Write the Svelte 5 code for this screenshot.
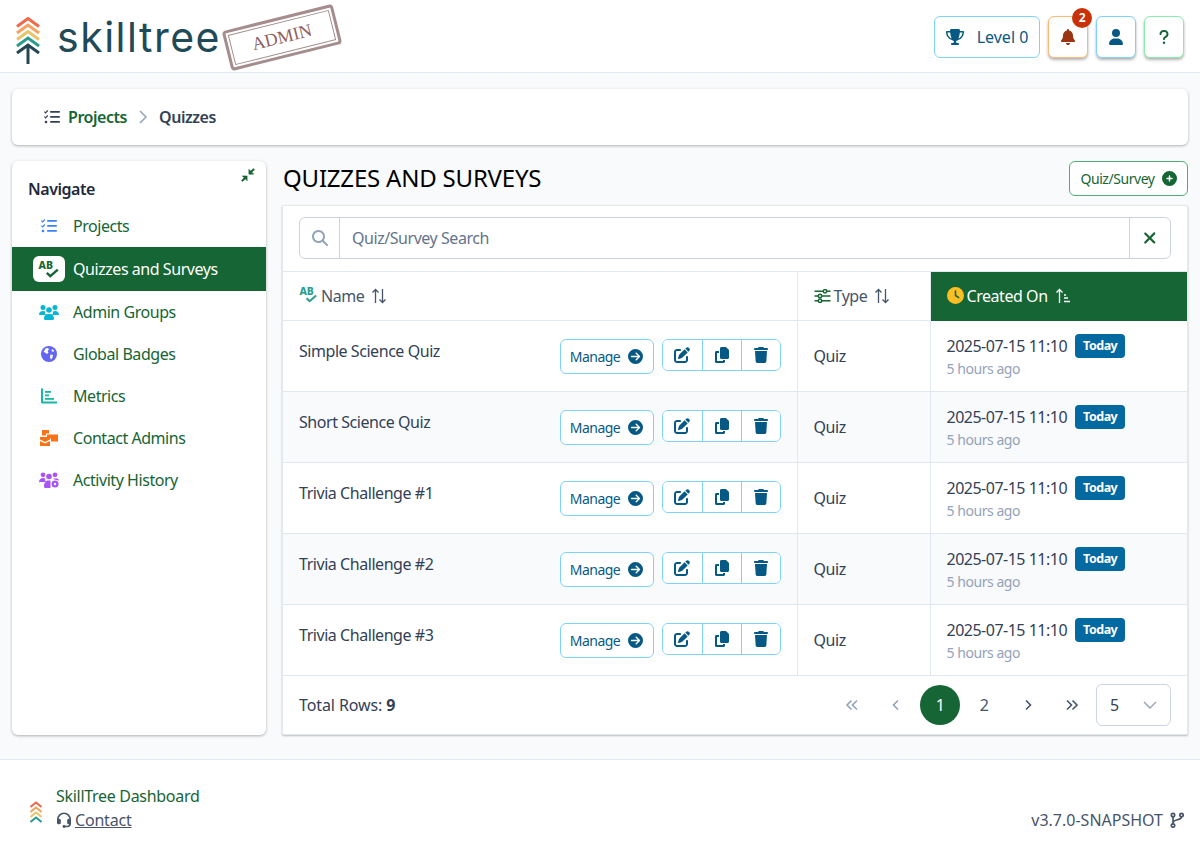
<script>
	const rows = [
		'Simple Science Quiz',
		'Short Science Quiz',
		'Trivia Challenge #1',
		'Trivia Challenge #2',
		'Trivia Challenge #3'
	];

	const paths = {
		bell: 'M224 0c-17.7 0-32 14.3-32 32V51.2C119 66 64 130.6 64 208v18.8c0 47-17.3 92.4-48.5 127.6l-7.4 8.3c-8.4 9.4-10.4 22.9-5.3 34.4S19.4 416 32 416H416c12.6 0 24-7.4 29.2-18.9s3.1-25-5.3-34.4l-7.4-8.3C401.3 319.2 384 273.9 384 226.8V208c0-77.4-55-142-128-156.8V32c0-17.7-14.3-32-32-32zm45.3 493.3c12-12 18.7-28.3 18.7-45.3H224 160c0 17 6.7 33.3 18.7 45.3s28.3 18.7 45.3 18.7s33.3-6.7 45.3-18.7z',
		user: 'M224 256A128 128 0 1 0 224 0a128 128 0 1 0 0 256zm-45.7 48C79.8 304 0 383.8 0 482.3C0 498.7 13.3 512 29.7 512H418.3c16.4 0 29.7-13.3 29.7-29.7C448 383.8 368.2 304 269.7 304H178.3z',
		trophy: 'M400 0H176c-26.5 0-48.1 21.8-47.1 48.2c.2 5.3 .4 10.6 .7 15.8H24C10.7 64 0 74.7 0 88c0 92.6 33.5 157 78.5 200.7c44.3 43.1 98.3 64.8 138.1 75.8c23.4 6.5 39.4 26 39.4 45.6c0 20.9-17 37.9-37.9 37.9H192c-17.7 0-32 14.3-32 32s14.3 32 32 32H384c17.7 0 32-14.3 32-32s-14.3-32-32-32H357.9C337 448 320 431 320 410.1c0-19.6 15.9-39.2 39.4-45.6c39.9-11 93.9-32.7 138.2-75.8C542.5 245 576 180.6 576 88c0-13.3-10.7-24-24-24H446.4c.3-5.2 .5-10.4 .7-15.8C448.1 21.8 426.5 0 400 0zM48.9 112h84.4c9.1 90.1 29.2 150.3 51.9 190.6c-24.9-11-50.8-26.5-73.2-48.3c-32-31.1-58-76-63-142.3zM464.1 254.3c-22.4 21.8-48.3 37.3-73.2 48.3c22.7-40.3 42.8-100.5 51.9-190.6h84.4c-5.1 66.3-31.1 111.2-63 142.3z',
		trash: 'M135.2 17.7L128 32H32C14.3 32 0 46.3 0 64S14.3 96 32 96H416c17.7 0 32-14.3 32-32s-14.3-32-32-32H320l-7.2-14.3C307.4 6.8 296.3 0 284.2 0H163.8c-12.1 0-23.2 6.8-28.6 17.7zM416 128H32L53.2 467c1.6 25.3 22.6 45 47.9 45H346.9c25.3 0 46.3-19.7 47.9-45L416 128z',
		copy: 'M208 0H332.1c12.7 0 24.9 5.1 33.9 14.1l67.9 67.9c9 9 14.1 21.2 14.1 33.9V336c0 26.5-21.5 48-48 48H208c-26.5 0-48-21.5-48-48V48c0-26.5 21.5-48 48-48zM48 128h80v64H64V448H256V416h64v48c0 26.5-21.5 48-48 48H48c-26.5 0-48-21.5-48-48V176c0-26.5 21.5-48 48-48z',
		edit: 'M471.6 21.7c-21.9-21.9-57.3-21.9-79.2 0L362.3 51.7l97.9 97.9 30.1-30.1c21.9-21.9 21.9-57.3 0-79.2L471.6 21.7zm-299.2 220c-6.1 6.1-10.8 13.6-13.5 21.9l-29.6 88.8c-2.9 8.6-.6 18.1 5.8 24.6s15.9 8.7 24.6 5.8l88.8-29.6c8.2-2.7 15.7-7.4 21.9-13.5L437.7 172.3 339.7 74.3 172.4 241.7zM96 64C43 64 0 107 0 160V416c0 53 43 96 96 96H352c53 0 96-43 96-96V320c0-17.7-14.3-32-32-32s-32 14.3-32 32v96c0 17.7-14.3 32-32 32H96c-17.7 0-32-14.3-32-32V160c0-17.7 14.3-32 32-32h96c17.7 0 32-14.3 32-32s-14.3-32-32-32H96z',
		arrow: 'M0 256a256 256 0 1 0 512 0A256 256 0 1 0 0 256zM297 385c-9.4 9.4-24.6 9.4-33.9 0s-9.4-24.6 0-33.9l71-71L120 280c-13.3 0-24-10.7-24-24s10.7-24 24-24l214.1 0-71-71c-9.4-9.4-9.4-24.6 0-33.9s24.6-9.4 33.9 0L409 239c9.4 9.4 9.4 24.6 0 33.9L297 385z',
		plus: 'M256 512A256 256 0 1 0 256 0a256 256 0 1 0 0 512zM232 344V280H168c-13.3 0-24-10.7-24-24s10.7-24 24-24h64V168c0-13.3 10.7-24 24-24s24 10.7 24 24v64h64c13.3 0 24 10.7 24 24s-10.7 24-24 24H280v64c0 13.3-10.7 24-24 24s-24-10.7-24-24z',
		clock: 'M256 0a256 256 0 1 1 0 512A256 256 0 1 1 256 0zM232 120V256c0 8 4 15.5 10.7 20l96 64c11 7.4 25.9 4.4 33.3-6.7s4.4-25.9-6.7-33.3L280 243.2V120c0-13.3-10.7-24-24-24s-24 10.7-24 24z',
		question: 'M80 160c0-35.3 28.7-64 64-64h32c35.3 0 64 28.7 64 64v3.6c0 21.8-11.1 42.1-29.4 53.8l-42.2 27.1c-25.2 16.2-40.4 44.1-40.4 74V320c0 17.7 14.3 32 32 32s32-14.3 32-32v-1.4c0-8.2 4.2-15.8 11-20.2l42.2-27.1c36.6-23.6 58.8-64.1 58.8-107.7V160c0-70.7-57.3-128-128-128H144C73.3 32 16 89.3 16 160c0 17.7 14.3 32 32 32s32-14.3 32-32zm80 320a40 40 0 1 0 0-80 40 40 0 1 0 0 80z',
		search: 'M416 208c0 45.9-14.9 88.3-40 122.7L502.6 457.4c12.5 12.5 12.5 32.8 0 45.3s-32.8 12.5-45.3 0L330.7 376c-34.4 25.2-76.8 40-122.7 40C93.1 416 0 322.9 0 208S93.1 0 208 0S416 93.1 416 208zM208 352a144 144 0 1 0 0-288 144 144 0 1 0 0 288z',
		xmark: 'M342.6 150.6c12.5-12.5 12.5-32.8 0-45.3s-32.8-12.5-45.3 0L192 210.7 86.6 105.4c-12.5-12.5-32.8-12.5-45.3 0s-12.5 32.8 0 45.3L146.7 256 41.4 361.4c-12.5 12.5-12.5 32.8 0 45.3s32.8 12.5 45.3 0L192 301.3 297.4 406.6c12.5 12.5 32.8 12.5 45.3 0s12.5-32.8 0-45.3L237.3 256 342.6 150.6z'
	};
</script>

{#snippet fa(name, vw, cls)}
	<svg class={cls} viewBox="0 0 {vw} 512" fill="currentColor" aria-hidden="true"><path d={paths[name]} /></svg>
{/snippet}

{#snippet listCheck(cls)}
	<svg class={cls} viewBox="0 0 16 14" fill="currentColor" aria-hidden="true">
		<path d="M0.4 1.600 1.600 2.800 3.800 0.500M0.4 6.600 1.600 7.800 3.800 5.500" fill="none" stroke="currentColor" stroke-width="1.200" />
		<circle cx="2" cy="12" r="1.300" />
		<rect x="6" y="1" width="10" height="1.800" rx=".8" />
		<rect x="6" y="6" width="10" height="1.800" rx=".8" />
		<rect x="6" y="11" width="10" height="1.800" rx=".8" />
	</svg>
{/snippet}

{#snippet quizIcon(cls, size)}
	<svg class={cls} viewBox="0 0 20 16" overflow="visible" aria-hidden="true">
		<text x="0.500" y="8" font-family="'Noto Sans', sans-serif" font-size={size} font-weight="800" letter-spacing="0" fill="currentColor">AB</text>
		<path d="M8 11.500 11.200 14.500 18 8.500" fill="none" stroke="currentColor" stroke-width="2.200" />
	</svg>
{/snippet}

{#snippet chevrons(cls)}
	<svg class={cls} viewBox="0 0 24 47" aria-hidden="true" fill="none" stroke-width="3">
		<path d="M1 9.500 12 1.500 23 9.500" stroke="#ee6a4a" />
		<path d="M1 16 12 8 23 16" stroke="#f4a261" />
		<path d="M1 22.500 12 14.500 23 22.500" stroke="#e9c46a" />
		<path d="M1 29 12 21 23 29" stroke="#2a9d8f" />
		<path d="M1 36 12 28 23 36M12 29V47" stroke="#264653" />
	</svg>
{/snippet}

{#snippet footChevrons(cls)}
	<svg class={cls} viewBox="0 0 12 22" aria-hidden="true" fill="none" stroke-width="2">
		<path d="M.5 6 6 1.500 11.500 6" stroke="#ee6a4a" />
		<path d="M.5 11 6 6.500 11.500 11" stroke="#f4a261" />
		<path d="M.5 16 6 11.500 11.500 16" stroke="#e9c46a" />
		<path d="M.5 21 6 16.500 11.500 21" stroke="#2a9d8f" />
	</svg>
{/snippet}

{#snippet sortBoth()}
	<svg class="sort" viewBox="0 0 16 16" fill="none" stroke="currentColor" stroke-width="1.300" aria-hidden="true">
		<path d="M4.500 15V1.500M1.500 4.500 4.500 1.500 7.500 4.500M11.500 1V14.500M8.500 11.500 11.500 14.500 14.500 11.500" />
	</svg>
{/snippet}

<header class="topbar">
	<div class="brand">
		{@render chevrons('tree')}
		<span class="wordmark">skilltree</span>
		<div class="stamp"><div class="stamp-inner">ADMIN</div></div>
	</div>
	<div class="top-actions">
		<button class="top-btn level">
			{@render fa('trophy', 576, 'ic16')}
			<span>Level 0</span>
		</button>
		<button class="top-btn square orange">
			{@render fa('bell', 448, 'ic16')}
			<span class="count">2</span>
		</button>
		<button class="top-btn square blue">{@render fa('user', 448, 'ic16')}</button>
		<button class="top-btn square green">{@render fa('question', 320, 'ic16')}</button>
	</div>
</header>

<div class="page">
	<nav class="crumbs">
		{@render listCheck('crumb-icon')}
		<a href="#projects">Projects</a>
		<svg class="crumb-sep" viewBox="0 0 10 16" fill="none" stroke="currentColor" stroke-width="1.500" aria-hidden="true"><path d="M2 2 8 8 2 14" /></svg>
		<span>Quizzes</span>
	</nav>

	<div class="columns">
		<aside class="side">
			<svg class="collapse" viewBox="0 0 16 16" fill="currentColor" stroke="currentColor" aria-hidden="true">
				<path d="M9 1.500V7H14.500ZM7 9V14.500L1.500 9Z" stroke-width=".6" />
				<path d="M10.500 5.500 15 1M5.500 10.500 1 15" stroke-width="2.400" fill="none" />
			</svg>
			<h2>Navigate</h2>
			<ul>
				<li><span class="nav-ic">{@render listCheck('n-ic c-blue')}</span>Projects</li>
				<li class="active"><span class="nav-ic badge-ic">{@render quizIcon('n-quiz', 9.5)}</span>Quizzes and Surveys</li>
				<li>
					<span class="nav-ic">
						<svg class="n-ic wide c-cyan" viewBox="0 0 20 16" fill="currentColor" aria-hidden="true">
							<circle cx="4" cy="3.500" r="2.500" /><circle cx="16" cy="3.500" r="2.500" /><circle cx="10" cy="6" r="2.800" />
							<path d="M0 10.500C0 8 2 7 4 7 5 7 5.800 7.300 6.300 7.800 5.800 8.800 6.200 10 7 11H1C.4 11 0 10.900 0 10.500ZM20 10.500C20 8 18 7 16 7 15 7 14.200 7.300 13.700 7.800 14.200 8.800 13.800 10 13 11H19C19.600 11 20 10.900 20 10.500ZM5 14.500C5 11.500 7 10 8.500 10H11.500C13 10 15 11.500 15 14.500 15 15.400 14.500 16 14 16H6C5.500 16 5 15.400 5 14.500Z" />
						</svg>
					</span>Admin Groups
				</li>
				<li>
					<span class="nav-ic">
						<svg class="n-ic c-indigo" viewBox="0 0 16 16" aria-hidden="true">
							<circle cx="8" cy="8" r="8" fill="currentColor" />
							<path d="M4.500 2.500 7 2 8 3.500 6.500 5 7.500 6.500 6 8 4 6.500 2.500 6ZM9.500 8.500 12 9 11.500 11.500 10 13.500 9 11.500ZM11 3 13 4.500 12.500 6 10.500 5Z" fill="#fff" />
						</svg>
					</span>Global Badges
				</li>
				<li>
					<span class="nav-ic">
						<svg class="n-ic c-teal" viewBox="0 0 16 16" fill="currentColor" aria-hidden="true">
							<path d="M0 .5H2V13.500H16V15.500H1.500C.6 15.500 0 14.900 0 14Z" />
							<rect x="4" y="3" width="6" height="1.800" /><rect x="4" y="6.500" width="4" height="1.800" /><rect x="4" y="10" width="9" height="1.800" />
						</svg>
					</span>Metrics
				</li>
				<li>
					<span class="nav-ic">
						<svg class="n-ic wide c-orange" viewBox="0 0 18 16" fill="currentColor" aria-hidden="true">
							<path d="M2 0H9V3.500H6V5.500H2ZM7 4.500H18V11.500H11V8.500H7ZM14 7H16V9H14ZM0 7H10V9.500L5 12 0 9.500ZM0 11 5 13.500 10 11V16H0Z" />
						</svg>
					</span>Contact Admins
				</li>
				<li>
					<span class="nav-ic">
						<svg class="n-ic wide c-purple" viewBox="0 0 20 16" fill="currentColor" aria-hidden="true">
							<circle cx="4" cy="2.800" r="2.400" /><circle cx="16" cy="2.800" r="2.400" /><circle cx="10" cy="4.500" r="2.800" />
							<path d="M0 10C0 7.500 2 6 4 6 5 6 5.800 6.300 6.300 6.800 5.800 7.800 6.200 9 7 10H1C.4 10.500 0 10.400 0 10ZM5 14C5 11 7 8.500 9 8.500H11.500V16H6C5.500 16 5 15 5 14Z" />
							<circle cx="16" cy="12" r="3.500" /><circle cx="16" cy="12" r="1.200" fill="#fff" />
							<path d="M13.500 6.500H18C19 6.500 20 7.500 20 8.500L16 7.800Z" />
						</svg>
					</span>Activity History
				</li>
			</ul>
		</aside>

		<main class="content">
			<div class="title-row">
				<h1>QUIZZES AND SURVEYS</h1>
				<button class="new-btn">Quiz/Survey {@render fa('plus', 512, 'ic15')}</button>
			</div>

			<section class="panel">
				<div class="search-wrap">
					<div class="search">
						<span class="addon">{@render fa('search', 512, 'ic16')}</span>
						<span class="placeholder">Quiz/Survey Search</span>
						<span class="addon clear">{@render fa('xmark', 384, 'ic18')}</span>
					</div>
				</div>

				<table>
					<colgroup><col class="c1" /><col class="c2" /><col class="c3" /></colgroup>
					<thead>
						<tr>
							<th><span class="th">{@render quizIcon('th-quiz', 11)}Name {@render sortBoth()}</span></th>
							<th>
								<span class="th">
									<svg class="th-slide" viewBox="0 0 16 14" fill="none" stroke="currentColor" stroke-width="1.500" aria-hidden="true">
										<path d="M0 2.200H16M0 7H16M0 11.800H16" />
										<circle cx="10.500" cy="2.200" r="1.700" fill="#fff" /><circle cx="5.500" cy="7" r="1.700" fill="#fff" /><circle cx="5.500" cy="11.800" r="1.700" fill="#fff" />
									</svg>
									Type {@render sortBoth()}
								</span>
							</th>
							<th class="sorted">
								<span class="th">
									{@render fa('clock', 512, 'ic17 c-amber')}
									Created On
									<svg class="sort" viewBox="0 0 16 16" fill="none" stroke="currentColor" stroke-width="1.300" aria-hidden="true">
										<path d="M4.500 15V1.500M1.500 4.500 4.500 1.500 7.500 4.500M9 7H11M9 10H13M9 13.500H15" />
									</svg>
								</span>
							</th>
						</tr>
					</thead>
					<tbody>
						{#each rows as name, i}
							<tr class:odd={i % 2 === 1}>
								<td class="lower">
									<div class="name-cell">
										<span class="quiz-name">{name}</span>
										<div class="row-actions">
											<button class="manage">Manage {@render fa('arrow', 512, 'ic15')}</button>
											<div class="group">
												<button>{@render fa('edit', 512, 'ic16')}</button>
												<button>{@render fa('copy', 448, 'ic16')}</button>
												<button>{@render fa('trash', 448, 'ic16')}</button>
											</div>
										</div>
									</div>
								</td>
								<td>Quiz</td>
								<td>
									<div class="date"><span>2025-07-15 11:10</span><span class="today">Today</span></div>
									<div class="ago">5 hours ago</div>
								</td>
							</tr>
						{/each}
					</tbody>
				</table>

				<div class="pager">
					<span class="total">Total Rows: <b>9</b></span>
					<div class="pages">
						<svg class="pg faint" viewBox="0 0 14 12" fill="none" stroke="currentColor" stroke-width="1.600" aria-hidden="true"><path d="M6.500 1.500 2 6 6.500 10.500M12 1.500 7.500 6 12 10.500" /></svg>
						<svg class="pg faint" viewBox="0 0 14 12" fill="none" stroke="currentColor" stroke-width="1.600" aria-hidden="true"><path d="M9 1.500 4.500 6 9 10.500" /></svg>
						<span class="pg-num current">1</span>
						<span class="pg-num">2</span>
						<svg class="pg" viewBox="0 0 14 12" fill="none" stroke="currentColor" stroke-width="1.600" aria-hidden="true"><path d="M5 1.500 9.500 6 5 10.500" /></svg>
						<svg class="pg" viewBox="0 0 14 12" fill="none" stroke="currentColor" stroke-width="1.600" aria-hidden="true"><path d="M2 1.500 6.500 6 2 10.500M7.500 1.500 12 6 7.500 10.500" /></svg>
						<div class="size">
							<span>5</span>
							<svg viewBox="0 0 14 8" fill="none" stroke="currentColor" stroke-width="1.400" aria-hidden="true"><path d="M1 1 7 7 13 1" /></svg>
						</div>
					</div>
				</div>
			</section>
		</main>
	</div>
</div>

<footer class="foot">
	<div class="foot-left">
		{@render footChevrons('foot-tree')}
		<div>
			<div class="foot-name">SkillTree Dashboard</div>
			<div class="foot-contact">
				<svg class="headset" viewBox="0 0 16 16" fill="none" stroke="currentColor" aria-hidden="true">
					<path d="M1.800 9V7.500C1.800 4 4.500 1.300 8 1.300S14.200 4 14.200 7.500V11.500C14.200 13.500 12.500 14.500 11 14.500H8.500" stroke-width="1.600" />
					<rect x="1" y="6.800" width="3.800" height="5.500" rx="1.500" fill="currentColor" stroke="none" />
					<rect x="11.200" y="6.800" width="3.800" height="5.500" rx="1.500" fill="currentColor" stroke="none" />
					<circle cx="8" cy="14.500" r="1.400" fill="currentColor" stroke="none" />
				</svg>
				<a href="#contact">Contact</a>
			</div>
		</div>
	</div>
	<div class="version">
		v3.7.0-SNAPSHOT
		<svg class="fork" viewBox="0 0 14 16" fill="none" stroke="currentColor" stroke-width="1.700" aria-hidden="true">
			<circle cx="3" cy="3" r="1.700" /><circle cx="3" cy="13.500" r="1.700" /><circle cx="11.500" cy="3" r="1.700" />
			<path d="M3 5V11.500M11.500 5C11.500 8.500 3 7 3 11" />
		</svg>
	</div>
</footer>

<style>
	:global(body) {
		background: #f8fafc;
		color: #334155;
		font-family: 'Noto Sans', sans-serif;
		font-size: 16px;
		letter-spacing: -0.45px;
	}

	svg { display: block; flex: none; }
	button { font: inherit; letter-spacing: inherit; cursor: pointer; background: #fff; }

	.ic15 { height: 15px; }
	.ic16 { height: 16px; }
	.ic17 { height: 17px; }
	.ic18 { height: 18px; }

	.c-blue { color: #3b82f6; }
	.c-cyan { color: #06b6d4; }
	.c-indigo { color: #6366f1; }
	.c-teal { color: #14b8a6; }
	.c-orange { color: #f97316; }
	.c-purple { color: #a855f7; }
	.c-amber { color: #fbbf24; }

	.topbar {
		height: 73px;
		box-sizing: border-box;
		background: #fff;
		border-bottom: 1px solid #e2e8f0;
		display: flex;
		align-items: center;
		justify-content: space-between;
		padding: 2px 16px 0 15px;
	}

	.brand {
		position: relative;
		display: flex;
		align-items: center;
		gap: 16px;
		margin-top: 6px;
	}

	.tree { width: 26px; height: 47px; }

	.wordmark {
		font-family: Inter, sans-serif;
		font-weight: 400;
		font-size: 41px;
		color: #1f4a57;
		letter-spacing: 1.500px;
		line-height: 1;
		margin-top: -5px;
	}

	.stamp {
		position: absolute;
		left: 210px;
		top: 0;
		width: 114px;
		height: 41px;
		box-sizing: border-box;
		padding: 2px;
		border: 3px solid #a58d8d;
		border-radius: 4px;
		transform: rotate(-14deg);
	}

	.stamp-inner {
		height: 100%;
		box-sizing: border-box;
		border: 1px solid #a58d8d;
		color: #8f5f5f;
		font-family: 'Liberation Serif', serif;
		font-size: 18px;
		letter-spacing: 0;
		line-height: 29px;
		text-align: center;
	}

	.top-actions { display: flex; gap: 8px; }

	.top-btn {
		height: 42px;
		box-sizing: border-box;
		border: 1px solid #7dd3fc;
		border-radius: 6px;
		color: #075985;
		display: flex;
		align-items: center;
		justify-content: center;
		position: relative;
		padding: 0;
	}

	.level { width: 106px; gap: 13px; letter-spacing: 0; }
	.square { width: 40px; box-shadow: 0 2px 3px rgba(0, 0, 0, 0.3); }
	.orange { border-color: #fdba74; color: #9a3412; }
	.green { border-color: #86efac; color: #166534; }

	.count {
		position: absolute;
		top: -9px;
		right: -5px;
		width: 20px;
		height: 20px;
		border-radius: 50%;
		background: #c93208;
		color: #fff;
		font-size: 12px;
		font-weight: 700;
		line-height: 20px;
		text-align: center;
	}

	.page { padding: 16px 12px 24px; }

	.crumbs {
		height: 56px;
		background: #fff;
		border-radius: 6px;
		box-shadow: 0 1px 3px rgba(0, 0, 0, 0.3);
		display: flex;
		align-items: center;
		padding-left: 32px;
		font-weight: 600;
		color: #334155;
	}

	.crumb-icon { width: 16px; height: 14px; margin-right: 8px; }
	.crumbs a { color: #166534; text-decoration: none; }
	.crumb-sep { width: 10px; height: 16px; margin: 0 11px; color: #94a3b8; }

	.columns {
		display: flex;
		gap: 16px;
		margin-top: 16px;
		align-items: stretch;
	}

	.side {
		position: relative;
		width: 254px;
		flex: none;
		background: #fff;
		border-radius: 6px;
		box-shadow: 0 1px 3px rgba(0, 0, 0, 0.3);
		padding-top: 18px;
		box-sizing: border-box;
	}

	.collapse {
		position: absolute;
		top: 7px;
		right: 11px;
		width: 14px;
		height: 14px;
		color: #166534;
	}

	.side h2 {
		margin: 0 0 6px 16px;
		font-size: 16px;
		font-weight: 600;
		line-height: 20px;
		color: #1e293b;
	}

	.side ul { list-style: none; margin: 0; padding: 0; }

	.side li {
		height: 42px;
		display: flex;
		align-items: center;
		color: #166534;
	}

	.side li.active {
		height: 44px;
		background: #166534;
		color: #fff;
	}

	.nav-ic {
		width: 61px;
		display: flex;
		justify-content: center;
		padding-left: 12px;
		box-sizing: border-box;
		flex: none;
	}

	.n-ic { height: 14px; width: 16px; }
	.n-ic.wide { width: 20px; height: 16px; }
	.c-indigo, .c-teal { height: 16px; }

	.badge-ic {
		width: 32px;
		height: 26px;
		margin: 0 8px 0 21px;
		padding: 0;
		background: #fff;
		border-radius: 6px;
		align-items: center;
		color: #166534;
	}

	.n-quiz { width: 22px; height: 18px; }

	.content { flex: 1; min-width: 0; }

	.title-row {
		display: flex;
		justify-content: space-between;
		align-items: center;
		height: 35px;
		margin-bottom: 9px;
	}

	h1 {
		margin: -2px 0 0 1px;
		font-size: 24px;
		font-weight: 400;
		letter-spacing: -0.2px;
		color: #000;
	}

	.new-btn {
		width: 119px;
		height: 35px;
		border: 1px solid #4fae76;
		border-radius: 6px;
		color: #166534;
		font-size: 14px;
		display: flex;
		align-items: center;
		justify-content: center;
		gap: 7px;
		padding: 0;
	}

	.panel {
		background: #fff;
		border: 1px solid #e2e8f0;
		border-radius: 2px;
		box-shadow: 0 1px 2px rgba(0, 0, 0, 0.25);
		box-sizing: border-box;
		height: 530px;
	}

	.search-wrap {
		padding: 11px 16px 12px;
		border-bottom: 1px solid #e2e8f0;
	}

	.search {
		height: 42px;
		box-sizing: border-box;
		border: 1px solid #cbd5e1;
		border-radius: 6px;
		display: flex;
		align-items: center;
		color: #64748b;
	}

	.addon {
		width: 39px;
		height: 100%;
		display: flex;
		align-items: center;
		justify-content: center;
		color: #94a3b8;
		border-right: 1px solid #cbd5e1;
		flex: none;
	}

	.placeholder { flex: 1; padding-left: 12px; }

	.clear {
		width: 40px;
		border-right: 0;
		border-left: 1px solid #cbd5e1;
		color: #166534;
	}

	table {
		width: 100%;
		border-collapse: collapse;
		table-layout: fixed;
	}

	.c1 { width: 514px; }
	.c2 { width: 133px; }

	th {
		height: 48px;
		padding: 0 16px;
		text-align: left;
		font-weight: 400;
		color: #475569;
		border-bottom: 1px solid #e2e8f0;
		border-left: 1px solid #e2e8f0;
		box-sizing: border-box;
	}

	th:first-child, td:first-child { border-left: 0; }

	th.sorted {
		background: #166534;
		color: #fff;
		border-bottom-color: #166534;
	}

	.th { display: flex; align-items: center; gap: 3px; }
	.th-quiz { width: 19px; height: 16px; color: #2a9d8f; margin-top: -1px; }
	.th-slide { width: 17px; height: 14px; color: #166534; }
	.sort { width: 16px; height: 16px; margin-left: 4px; }

	td {
		height: 71px;
		padding: 0 16px;
		border-bottom: 1px solid #e2e8f0;
		border-left: 1px solid #e2e8f0;
		color: #334155;
		vertical-align: middle;
		box-sizing: border-box;
	}

	td.lower { padding-top: 2px; }

	tr.odd td { background: #f8fafc; }

	.name-cell {
		display: flex;
		justify-content: space-between;
		align-items: flex-start;
	}

	.quiz-name { line-height: 24px; }

	.row-actions { display: flex; gap: 8px; align-items: flex-start; }

	.manage {
		width: 94px;
		height: 35px;
		box-sizing: border-box;
		border: 1px solid #7dd3fc;
		border-radius: 6px;
		color: #075985;
		font-size: 14px;
		letter-spacing: -0.55px;
		display: flex;
		align-items: center;
		justify-content: center;
		gap: 8px;
		padding: 0;
	}

	.group {
		display: flex;
		height: 32px;
		box-sizing: border-box;
		border: 1px solid #7dd3fc;
		border-radius: 6px;
		overflow: hidden;
	}

	.group button {
		width: 39px;
		border: 0;
		border-left: 1px solid #7dd3fc;
		color: #075985;
		display: flex;
		align-items: center;
		justify-content: center;
		padding: 0;
	}

	.group button:first-child { border-left: 0; }

	.date { display: flex; align-items: center; gap: 8px; letter-spacing: -0.5px; }

	.today {
		background: #0369a1;
		color: #fff;
		font-size: 12.500px;
		font-weight: 700;
		line-height: 24px;
		height: 24px;
		padding: 0 8px;
		border-radius: 4px;
	}

	.ago { color: #94a3b8; font-size: 14px; margin-top: 1px; }

	.pager {
		height: 59px;
		padding: 0 16px;
		display: flex;
		align-items: center;
		justify-content: space-between;
	}

	.total { letter-spacing: -0.1px; }
	.total b { font-weight: 700; }

	.pages { display: flex; align-items: center; color: #475569; }

	.pg {
		width: 40px;
		height: 12px;
		margin: 0 2px;
		color: #475569;
	}

	.pg.faint { color: #94a3b8; }

	.pg-num {
		width: 40px;
		height: 40px;
		margin: 0 2px;
		border-radius: 50%;
		line-height: 40px;
		text-align: center;
	}

	.pg-num.current { background: #166534; color: #fff; }

	.size {
		width: 75px;
		height: 42px;
		box-sizing: border-box;
		margin-left: 2px;
		border: 1px solid #cbd5e1;
		border-radius: 6px;
		display: flex;
		align-items: center;
		justify-content: space-between;
		padding: 0 13px;
		color: #334155;
	}

	.size svg { width: 14px; height: 8px; color: #94a3b8; }

	.foot {
		height: 97px;
		box-sizing: border-box;
		background: #fff;
		border-top: 1px solid #e2e8f0;
		display: flex;
		justify-content: space-between;
		padding: 24px 16px 0 30px;
		color: #475569;
	}

	.foot-left { display: flex; align-items: center; gap: 14px; height: 48px; }
	.foot-tree { width: 12px; height: 22px; margin-top: 8px; }
	.foot-name { color: #166534; line-height: 24px; letter-spacing: -0.3px; }
	.foot-contact { display: flex; align-items: center; gap: 3px; line-height: 24px; }
	.foot-contact a { color: #475569; letter-spacing: -0.2px; }
	.headset { width: 16px; height: 16px; }

	.version {
		display: flex;
		align-items: center;
		gap: 7px;
		height: 24px;
		margin-top: 24px;
		letter-spacing: 0;
	}

	.fork { width: 14px; height: 16px; }
</style>
